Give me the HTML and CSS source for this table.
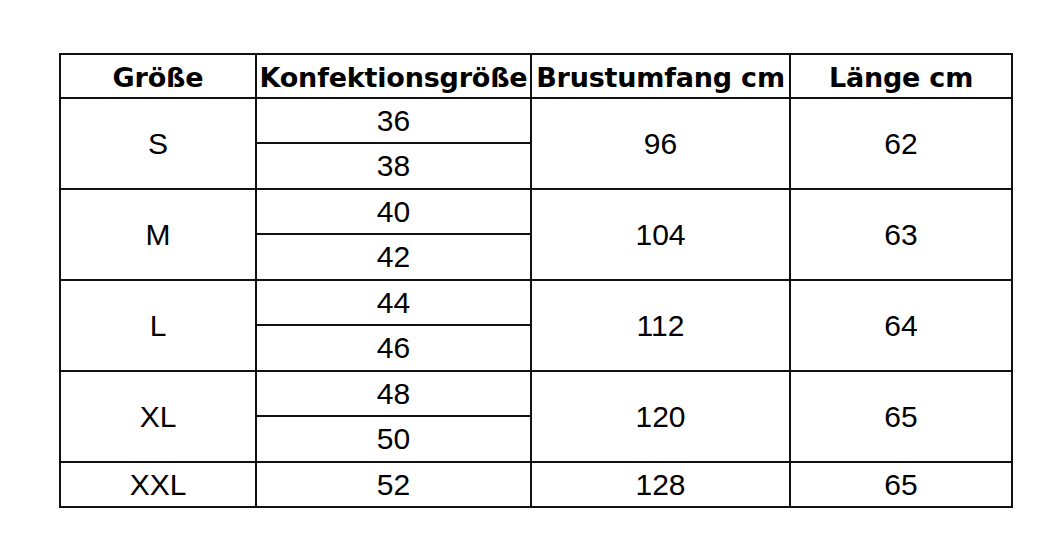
FILE: index.html
```html
<!DOCTYPE html>
<html lang="de">
<head>
<meta charset="utf-8">
<title>Größentabelle</title>
<link rel="stylesheet" href="styles.css">
</head>
<body>
<div class="table">
  <div class="cell head">Größe</div>
  <div class="cell head">Konfektionsgröße</div>
  <div class="cell head">Brustumfang cm</div>
  <div class="cell head">Länge cm</div>

  <div class="cell span2">S</div>
  <div class="cell">36</div>
  <div class="cell span2">96</div>
  <div class="cell span2">62</div>
  <div class="cell">38</div>

  <div class="cell span2">M</div>
  <div class="cell">40</div>
  <div class="cell span2">104</div>
  <div class="cell span2">63</div>
  <div class="cell">42</div>

  <div class="cell span2">L</div>
  <div class="cell">44</div>
  <div class="cell span2">112</div>
  <div class="cell span2">64</div>
  <div class="cell">46</div>

  <div class="cell span2">XL</div>
  <div class="cell">48</div>
  <div class="cell span2">120</div>
  <div class="cell span2">65</div>
  <div class="cell">50</div>

  <div class="cell">XXL</div>
  <div class="cell">52</div>
  <div class="cell">128</div>
  <div class="cell">65</div>
</div>
</body>
</html>
```
FILE: styles.css
```css
html, body {
  margin: 0;
  padding: 0;
  background: #ffffff;
}

body {
  font-family: "Liberation Sans", Arial, sans-serif;
  color: #000000;
}

.table {
  margin: 53px 0 0 59px;
  width: 950px;
  display: grid;
  grid-template-columns: 194px 273px 257px 220px;
  grid-template-rows: 42px 43px 44px 43px 44px 43px 44px 43px 44px 43px;
  gap: 2px;
  padding: 2px;
  background: #111111;
}

.cell {
  background: #ffffff;
  display: flex;
  align-items: center;
  justify-content: center;
  font-size: 30px;
  line-height: 1;
  white-space: nowrap;
}

.head {
  font-family: "DejaVu Sans", "Liberation Sans", sans-serif;
  font-weight: 700;
  font-size: 27px;
  letter-spacing: -0.2px;
  padding-top: 2px;
}

.span2 {
  grid-row: span 2;
}
```
